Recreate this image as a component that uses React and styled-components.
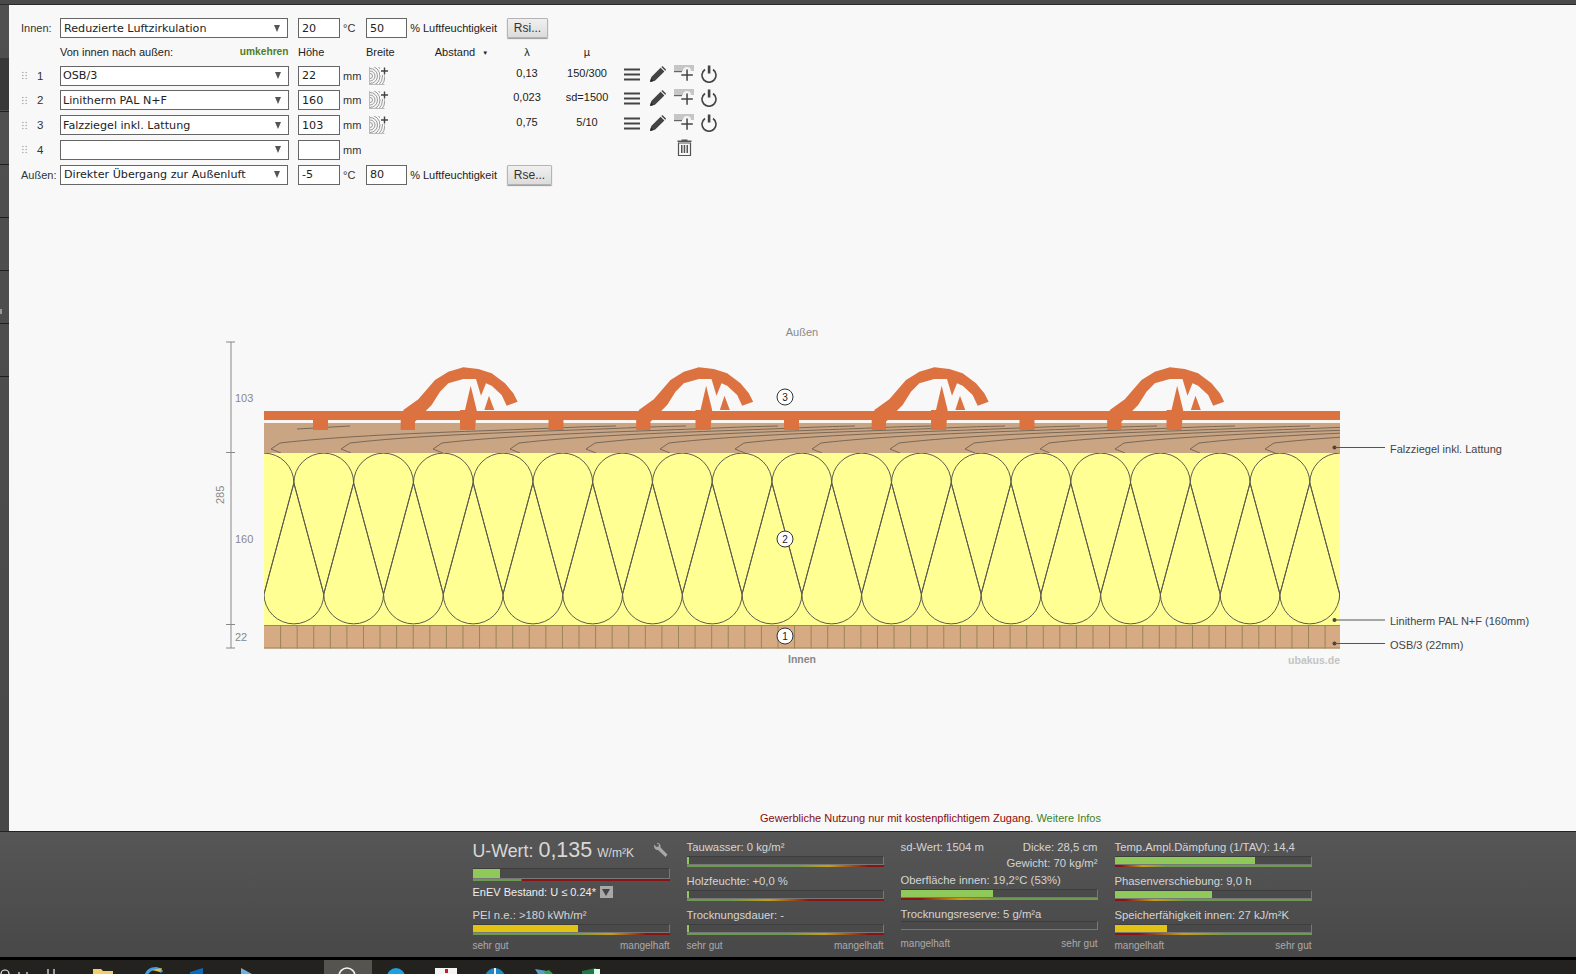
import React from 'react';
import styled, { createGlobalStyle } from 'styled-components';

const Global = createGlobalStyle`
  html, body { margin: 0; padding: 0; background: #000; }
  body { font-family: "Liberation Sans", Arial, sans-serif; }
`;

const Page = styled.div`
  width: 1576px;
  height: 974px;
  overflow: hidden;
  display: flex;
  flex-direction: column;
`;

const TopBar = styled.div`
  height: 5px;
  flex: none;
  background: #4a4a4a;
  border-bottom: 1px solid #2a2a2a;
  box-sizing: border-box;
`;

const Middle = styled.div`
  display: flex;
  height: 826px;
  flex: none;
`;

// the dark strip on the left has separators in its upper part only
const Sidebar = styled.div`
  width: 9px;
  flex: none;
  position: relative;
  background:
    linear-gradient(to bottom, transparent 53px, #383838 53px, #383838 105px, transparent 105px),
    repeating-linear-gradient(to bottom, transparent 0, transparent 52px, #1f1f1f 52px, #1f1f1f 53px) 0 1px / 100% 422px no-repeat,
    linear-gradient(#505050, #484848);

  &::after {
    content: '';
    position: absolute;
    left: 0;
    top: 304px;
    width: 2px;
    height: 5px;
    background: #999;
  }
`;

const Main = styled.div`
  flex: 1;
  background: #f8f8f8;
  display: flex;
  flex-direction: column;
  padding-top: 13px;
  box-sizing: border-box;
`;

const Form = styled.div`
  display: flex;
  flex-direction: column;
  gap: 4.75px;
  padding-left: 12px;
  font-size: 11px;
  color: #333;
`;

const Row = styled.div`
  display: grid;
  grid-template-columns: 39px 228.5px 9.5px 42px 26px 131px 60px 60px auto;
  height: ${({ $h }) => $h || 20}px;
  align-items: center;
`;

const RowLabel = styled.div`
  font-size: 11px;
  color: #333;
`;

const GripCell = styled.div`
  display: flex;
  align-items: center;
  gap: 9px;
  font-size: 11.5px;
  color: #333;
`;

const Grip = styled.span`
  width: 7px;
  height: 9px;
  background-image: radial-gradient(circle, #b4b4b4 1px, transparent 1.1px);
  background-size: 3.5px 3px;
`;

const SelectBox = styled.div`
  height: 100%;
  box-sizing: border-box;
  border: 1px solid #666;
  background: #fff;
  display: flex;
  align-items: center;
  justify-content: space-between;
  margin-right: ${({ $wide }) => ($wide ? 1 : 0)}px;
  padding: 0 7px 0 ${({ $wide }) => ($wide ? 3 : 2)}px;
  font-family: "DejaVu Sans", Verdana, sans-serif;
  font-size: 11.15px;
  color: #222;
  white-space: nowrap;
`;

const Caret = styled.span`
  width: 0;
  height: 0;
  border-left: 3.5px solid transparent;
  border-right: 3.5px solid transparent;
  border-top: 7px solid #555;
`;

const NumInput = styled.div`
  width: 42px;
  height: 100%;
  box-sizing: border-box;
  border: 1px solid #666;
  background: #fff;
  padding-left: 3px;
  display: flex;
  align-items: center;
  font-family: "DejaVu Sans", Verdana, sans-serif;
  font-size: 11.15px;
  color: #222;
`;

const Unit = styled.div`
  padding-left: 3px;
  font-size: 11px;
  color: #333;
`;

const Humid = styled.div`
  display: flex;
  align-items: center;
  gap: 3px;
  height: 100%;
  white-space: nowrap;
  font-size: 11px;
  color: #222;
`;

const Btn = styled.div`
  margin-left: 10px;
  width: ${({ $w }) => $w}px;
  height: 20px;
  box-sizing: border-box;
  border: 1px solid #b4b4b4;
  border-radius: 1px;
  background: linear-gradient(#f0f0f0, #dcdcdc);
  box-shadow: 0 1px 1px #999;
  display: flex;
  align-items: center;
  justify-content: center;
  font-size: 12px;
  color: #333;
`;

const HeadText = styled.div`
  color: #222;
  font-size: 11px;
`;

const HeadSplit = styled.div`
  display: flex;
  justify-content: space-between;
`;

const Reverse = styled.div`
  color: #4f7f1f;
  font-weight: bold;
  font-size: 10.2px;
`;

const HeadWidth = styled.div`
  display: flex;
  align-items: center;
  gap: 40px;
  color: #222;
  font-size: 11px;
`;

const SortMark = styled.span`
  font-size: 6px;
  margin-left: 7px;
  vertical-align: 1px;
`;

const Centered = styled.div`
  text-align: center;
  font-size: 11px;
  color: #222;
  position: relative;
  top: ${({ $up }) => $up || 0}px;
`;

const Actions = styled.div`
  display: flex;
  align-items: center;
  height: 20px;
  padding-left: 6px;
  margin-top: ${({ $m }) => $m || 0}px;
`;

const IconSlot = styled.span`
  display: block;
  height: 18px;
  margin-left: ${({ $ml }) => $ml || 0}px;
`;

const WidthIcon = styled.svg`
  margin-left: 3px;
  display: block;
`;

const ChartSvg = styled.svg`
  display: block;
  margin-top: 135.500px;
  flex: none;
`;

const Notice = styled.div`
  margin-top: 137px;
  text-align: center;
  padding-left: 276px;
  font-size: 11px;
  color: #8a0a0a;
`;

const NoticeLink = styled.span`
  color: #3f7f1f;
`;

const Panel = styled.div`
  height: 126px;
  flex: none;
  box-sizing: border-box;
  border-top: 1px solid #222;
  background: linear-gradient(#565656, #484848);
  padding: 0 0 0 472.5px;
  display: grid;
  grid-template-columns: 197px 197px 197px 197px;
  column-gap: 17px;
  color: #d4d4d4;
  font-size: 11.3px;
`;

const Col = styled.div`
  display: flex;
  flex-direction: column;
  padding-top: ${({ $top }) => $top || 8}px;
`;

const UHead = styled.div`
  display: flex;
  align-items: baseline;
  height: 27px;
  font-size: 17.8px;
  color: #d8d8d8;
  white-space: nowrap;
  position: relative;
`;

const UValue = styled.span`
  font-size: 21.5px;
  margin-left: 5px;
`;

const UUnit = styled.span`
  font-size: 12px;
  margin-left: 5px;
`;

const Wrench = styled.svg`
  position: absolute;
  right: 2px;
  top: 5px;
`;

const Metric = styled.div`
  height: 14px;
  line-height: 14px;
  white-space: nowrap;
  margin-top: ${({ $m }) => $m || 0}px;
  display: flex;
  justify-content: space-between;
  align-items: center;
`;

const Right = styled.div`
  text-align: right;
  height: 14px;
  line-height: 14px;
  margin-top: 2px;
  white-space: nowrap;
`;

const EnevLabel = styled.span`
  display: flex;
  align-items: center;
  color: #eee;
  font-size: 11px;
`;

const DropBox = styled.span`
  width: 13px;
  height: 12px;
  background: #a8a8a8;
  margin-left: 4px;
  display: inline-flex;
  align-items: center;
  justify-content: center;
`;

const DropCaret = styled.span`
  width: 0;
  height: 0;
  border-left: 4px solid transparent;
  border-right: 4px solid transparent;
  border-top: 7px solid #444;
`;

const BarTrack = styled.div`
  height: ${({ $big }) => ($big ? 9 : 7)}px;
  margin-top: ${({ $m }) => $m ?? 2}px;
  border-top: 1px solid #3d3d3d;
  border-right: 1px solid #777;
  background: #4a4a4a;
`;

const BarFill = styled.div`
  height: 100%;
  background: ${({ $c }) => $c};
`;

const Strip = styled.div`
  border-top: 1px solid #777;
  height: 2px;
  background: ${({ $g }) => $g};
`;

const Scale = styled.div`
  display: flex;
  justify-content: space-between;
  font-size: 10px;
  color: #aaa;
  margin-top: ${({ $m }) => $m || 5}px;
`;

const Gap = styled.div`
  height: 3px;
  background: #000;
  flex: none;
`;

const Taskbar = styled.div`
  height: 14px;
  flex: none;
  background: #23221e;
  position: relative;
  overflow: hidden;
`;

const TaskHighlight = styled.div`
  position: absolute;
  left: 324px;
  top: 0;
  width: 48px;
  height: 14px;
  background: #55544e;
`;

const TaskIcons = styled.svg`
  position: absolute;
  left: 0;
  top: 0;
`;

const GREEN = '#8fc95a';
const YELLOW = '#e2c213';
const G = '#6c9a4e';
const Y = '#c8a010';
const R = '#8a1414';

const goodBad = (a, b, c) => `linear-gradient(to right, ${G} 0%, ${G} ${a}%, ${Y} ${b}%, ${R} ${c}%, ${R} 100%)`;
const badGood = (a, b, c) => `linear-gradient(to right, ${R} 0%, ${R} ${a}%, ${Y} ${b}%, ${G} ${c}%, ${G} 100%)`;

function Bar({ fill, color = GREEN, strip, big, m }) {
  return (
    <>
      <BarTrack $big={big} $m={m}>
        {fill ? <BarFill $c={color} style={{ width: fill }} /> : null}
      </BarTrack>
      <Strip $g={strip} />
    </>
  );
}

function HamburgerIcon() {
  return (
    <svg width="18" height="18" viewBox="0 0 18 18">
      <path d="M1 3.500h16v2H1zM1 8.500h16v2H1zM1 13.500h16v2H1z" fill="#444" />
    </svg>
  );
}

function PencilIcon() {
  return (
    <svg width="18" height="18" viewBox="0 0 18 18">
      <path d="M1 17l1.300-5L11.600 2.700l3.800 3.800L6 15.800z" fill="#444" />
      <path d="M12.400 1.900l1-1 3.800 3.800-1 1z" fill="#444" />
      <path d="M1 17l1-3.600 2.600 2.600z" fill="#222" />
    </svg>
  );
}

function LayerAddIcon() {
  return (
    <svg width="21" height="18" viewBox="0 0 21 18">
      <rect x="0" y="0" width="20" height="6" fill="#c6c6c6" />
      <rect x="0" y="6" width="8" height="1.200" fill="#666" />
      <path d="M9 6a4 4 0 0 1 8 0z" fill="#f4f4f4" />
      <path d="M12.300 4.500h1.500v4.700h5v1.500h-5v5h-1.500v-5h-5V9.200h5z" fill="#444" />
    </svg>
  );
}

function PowerIcon() {
  return (
    <svg width="18" height="18" viewBox="0 0 18 18">
      <path d="M5 4.500a7 7 0 1 0 8 0" fill="none" stroke="#444" strokeWidth="1.600" />
      <rect x="7.800" y="0.500" width="2.600" height="8" fill="#444" />
    </svg>
  );
}

function TrashIcon() {
  return (
    <svg width="15" height="18" viewBox="0 0 15 18">
      <path d="M4.500 1.500h6v1h4v1.500H.5V2.500h4z" fill="#555" />
      <path d="M1.500 5h12v12.500h-12z" fill="none" stroke="#555" strokeWidth="1.200" />
      <path d="M4 7h1.500v8H4zM6.700 7h1.500v8H6.700zM9.500 7h1.500v8H9.500z" fill="#555" />
    </svg>
  );
}

function WavesIcon() {
  return (
    <WidthIcon width="20" height="20" viewBox="0 0 20 20">
      <svg x="0" y="1" width="16" height="18" viewBox="0 0 16 18">
        <g fill="none" stroke="#9a9a9a" strokeWidth="1">
          <circle cx="1" cy="9" r="2.500" />
          <circle cx="1" cy="9" r="5" />
          <circle cx="1" cy="9" r="7.500" />
          <circle cx="1" cy="9" r="10" />
          <circle cx="1" cy="9" r="12.500" />
          <circle cx="1" cy="9" r="15" />
        </g>
        <path d="M.5 0v18M.5 17.500h15" stroke="#bbb" strokeWidth="1" fill="none" />
      </svg>
      <rect x="11" y="0" width="9" height="9" fill="#f8f8f8" />
      <path d="M14.800 1.500h1.400v2.800H19v1.400h-2.800v2.800h-1.400V5.700H12V4.300h2.800z" fill="#444" />
    </WidthIcon>
  );
}

const grid = 59.76;
const top = 453;
const left = 264;
const right = 1340;

function Insulation() {
  const cyTop = 483;
  const cyBot = 594;
  const shapes = [];
  for (let k = 0; k <= 18; k++) {
    const cx = left + grid * k;
    const r = grid / 2;
    shapes.push(
      <path
        key={`t${k}`}
        d={`M${cx - r} ${cyTop}A${r} ${r} 0 0 1 ${cx + r} ${cyTop}L${cx} ${cyBot}Z`}
      />,
    );
    const bx = cx + r;
    shapes.push(
      <path
        key={`b${k}`}
        d={`M${bx - r} ${cyBot}A${r} ${r} 0 0 0 ${bx + r} ${cyBot}L${bx} ${cyTop}Z`}
      />,
    );
  }
  return (
    <g clipPath="url(#ins)" fill="none" stroke="#5c5c50" strokeWidth="1">
      {shapes}
    </g>
  );
}

function Osb() {
  const cells = [];
  const step = 16.58;
  for (let x = left + step; x < right; x += step) {
    cells.push(<line key={x} x1={x} x2={x} y1="625" y2="648.500" />);
  }
  return (
    <g>
      <rect x={left} y="625" width={right - left} height="23.500" fill="#d6aa82" />
      <g stroke="#998659" strokeWidth="1">
        {cells}
        <line x1={left} x2={right} y1="625.500" y2="625.500" />
        <line x1={left} x2={right} y1="648" y2="648" />
      </g>
    </g>
  );
}

const hooks = [271, 341, 433, 510, 586, 660, 735, 812, 890, 965, 1040, 1115, 1190, 1265];

function Wood() {
  return (
    <g>
      <rect x={left} y="423" width={right - left} height="30" fill="#c9a584" />
      <g clipPath="url(#wood)" fill="none" stroke="#6f6152" strokeWidth="0.900">
        <path d="M297 429L350 426" />
        {hooks.map((x) => (
          <path
            key={x}
            d={`M${x + 10} 453L${x} 449L${x + 9} 443C${x + 70} 436 ${x + 150} 433 ${x + 220} 430.500S${x + 300} 427 ${x + 345} 426`}
          />
        ))}
      </g>
    </g>
  );
}

function pts(list, dx) {
  return list.map(([x, y]) => `${380 + x / 3 + dx},${355 + y / 3}`).join(' ');
}

const ridge = [
  [70, 165], [115, 133], [165, 75], [205, 50], [250, 37], [295, 42], [335, 55], [375, 85],
  [400, 115], [413, 140], [380, 152], [365, 120], [335, 92], [318, 85], [303, 122], [288, 72],
  [250, 72], [205, 85], [180, 110], [155, 150], [105, 200], [105, 225], [62, 225], [62, 190], [70, 190],
];
const spikeA = [[240, 165], [255, 165], [272, 92], [290, 165], [285, 225], [240, 225]];
const spikeB = [[313, 165], [327, 122], [343, 165]];

function Tiles() {
  const period = 235.5;
  const offs = [0, 1, 2, 3];
  return (
    <g fill="#dc7240">
      <rect x={left} y="411" width={right - left} height="9.500" />
      <rect x={left} y="420" width={right - left} height="3" fill="#fdf6f0" />
      {offs.map((k) => (
        <rect key={k} x={313 + period * k} y="420" width="15" height="10" />
      ))}
      {offs.map((k) => (
        <g key={k}>
          <polygon points={pts(ridge, period * k)} />
          <polygon points={pts(spikeA, period * k)} />
          <polygon points={pts(spikeB, period * k)} />
        </g>
      ))}
    </g>
  );
}

const Dim = styled.g`
  stroke: #888;
  stroke-width: 1;
`;

const DimLabel = styled.text`
  font-family: "Liberation Sans", Arial, sans-serif;
  font-size: 11px;
  fill: #888;
`;

const BoldLabel = styled(DimLabel)`
  font-size: 10.5px;
  font-weight: bold;
  fill: ${({ $c }) => $c || '#888'};
`;

const CalloutText = styled.text`
  font-family: "Liberation Sans", Arial, sans-serif;
  font-size: 11px;
  fill: #444;
`;

const Marker = styled.text`
  font-family: "Liberation Sans", Arial, sans-serif;
  font-size: 10px;
  fill: #222;
  text-anchor: middle;
`;

function Bubble({ y, n }) {
  return (
    <g>
      <circle cx="785" cy={y} r="8" fill="#fff" stroke="#333" strokeWidth="1" />
      <Marker x="785" y={y + 3.500}>{n}</Marker>
    </g>
  );
}

function Callout({ y, text }) {
  return (
    <g>
      <circle cx="1334.500" cy={y} r="2" fill="#444" />
      <line x1="1335" x2="1385" y1={y} y2={y} stroke="#555" />
      <CalloutText x="1390" y={y + 5}>{text}</CalloutText>
    </g>
  );
}

function RoofChart() {
  return (
    <ChartSvg width="1567" height="355" viewBox="9 320 1567 355">
      <defs>
        <clipPath id="ins"><rect x={left} y={top} width={right - left} height="172" /></clipPath>
        <clipPath id="wood"><rect x={left} y="423" width={right - left} height="30" /></clipPath>
      </defs>
      <DimLabel x="802" y="336" textAnchor="middle">Außen</DimLabel>
      <Dim>
        <line x1="231" x2="231" y1="342" y2="648" />
        <line x1="226" x2="235" y1="342" y2="342" />
        <line x1="226" x2="235" y1="452.500" y2="452.500" />
        <line x1="226" x2="235" y1="624.500" y2="624.500" />
        <line x1="226" x2="235" y1="648" y2="648" />
      </Dim>
      <DimLabel x="235" y="402">103</DimLabel>
      <DimLabel x="235" y="543">160</DimLabel>
      <DimLabel x="235" y="641">22</DimLabel>
      <DimLabel transform="translate(224 504) rotate(-90)">285</DimLabel>
      <rect x={left} y={top} width={right - left} height="172" fill="#ffff94" />
      <Insulation />
      <Wood />
      <Tiles />
      <Osb />
      <Bubble y={397} n="3" />
      <Bubble y={539} n="2" />
      <Bubble y={636} n="1" />
      <Callout y={447.500} text="Falzziegel inkl. Lattung" />
      <Callout y={620} text="Linitherm PAL N+F (160mm)" />
      <Callout y={643.500} text="OSB/3 (22mm)" />
      <BoldLabel x="802" y="663" textAnchor="middle">Innen</BoldLabel>
      <BoldLabel x="1340" y="664" textAnchor="end" $c="#c4c4c4">ubakus.de</BoldLabel>
    </ChartSvg>
  );
}

const layers = [
  { n: 1, name: 'OSB/3', h: '22', lambda: '0,13', mu: '150/300' },
  { n: 2, name: 'Linitherm PAL N+F', h: '160', lambda: '0,023', mu: 'sd=1500' },
  { n: 3, name: 'Falzziegel inkl. Lattung', h: '103', lambda: '0,75', mu: '5/10' },
];

function LayerRow({ n, name, h, lambda, mu }) {
  return (
    <Row>
      <GripCell><Grip />{n}</GripCell>
      <SelectBox>{name}<Caret /></SelectBox>
      <span />
      <NumInput>{h}</NumInput>
      <Unit>mm</Unit>
      <WavesIcon />
      <Centered $up={-3}>{lambda}</Centered>
      <Centered $up={-3}>{mu}</Centered>
      <Actions $m={-4}>
        <IconSlot><HamburgerIcon /></IconSlot>
        <IconSlot $ml={8}><PencilIcon /></IconSlot>
        <IconSlot $ml={7}><LayerAddIcon /></IconSlot>
        <IconSlot $ml={5}><PowerIcon /></IconSlot>
      </Actions>
    </Row>
  );
}

export default function App() {
  return (
    <Page>
      <Global />
      <TopBar />
      <Middle>
        <Sidebar />
        <Main>
          <Form>
            <Row>
              <RowLabel>Innen:</RowLabel>
              <SelectBox $wide>Reduzierte Luftzirkulation<Caret /></SelectBox>
              <span />
              <NumInput>20</NumInput>
              <Unit>°C</Unit>
              <Humid><NumInput>50</NumInput>% Luftfeuchtigkeit</Humid>
              <Btn $w={41}>Rsi...</Btn>
            </Row>
            <Row $h={18}>
              <span />
              <HeadSplit>
                <HeadText>Von innen nach außen:</HeadText>
                <Reverse>umkehren</Reverse>
              </HeadSplit>
              <span />
              <HeadText>Höhe</HeadText>
              <span />
              <HeadWidth>
                <span>Breite</span>
                <span>Abstand<SortMark>▼</SortMark></span>
              </HeadWidth>
              <Centered>λ</Centered>
              <Centered>µ</Centered>
            </Row>
            {layers.map((l) => <LayerRow key={l.n} {...l} />)}
            <Row>
              <GripCell><Grip />4</GripCell>
              <SelectBox><span /><Caret /></SelectBox>
              <span />
              <NumInput />
              <Unit>mm</Unit>
              <span />
              <span />
              <span />
              <Actions $m={-5}>
                <IconSlot $ml={54}><TrashIcon /></IconSlot>
              </Actions>
            </Row>
            <Row>
              <RowLabel>Außen:</RowLabel>
              <SelectBox $wide>Direkter Übergang zur Außenluft<Caret /></SelectBox>
              <span />
              <NumInput>-5</NumInput>
              <Unit>°C</Unit>
              <Humid><NumInput>80</NumInput>% Luftfeuchtigkeit</Humid>
              <Btn $w={45}>Rse...</Btn>
            </Row>
          </Form>
          <RoofChart />
          <Notice>
            Gewerbliche Nutzung nur mit kostenpflichtigem Zugang. <NoticeLink>Weitere Infos</NoticeLink>
          </Notice>
        </Main>
      </Middle>
      <Panel>
        <Col $top={6}>
          <UHead>
            U-Wert:<UValue>0,135</UValue><UUnit>W/m²K</UUnit>
            <Wrench width="15" height="15" viewBox="0 0 15 15">
              <path d="M1 1.500L3.500 4l2-.5L6 1.500 3.500.3C6 -.5 8 1.500 7.500 4.500L14.500 11.500 12.500 14 5 7C2.500 7.500 .5 5 1 1.500z" fill="#a8a8a8" />
            </Wrench>
          </UHead>
          <Bar fill="27px" big m={3} strip={`linear-gradient(to right, ${G} 0, ${G} 48px, ${R} 49px, ${R} 100%)`} />
          <Metric $m={4}>
            <EnevLabel>EnEV Bestand: U ≤ 0.24*<DropBox><DropCaret /></DropBox></EnevLabel>
          </Metric>
          <Metric $m={9}>PEI n.e.: &gt;180 kWh/m²</Metric>
          <Bar fill="105px" color={YELLOW} strip={goodBad(50, 70, 88)} />
          <Scale><span>sehr gut</span><span>mangelhaft</span></Scale>
        </Col>
        <Col>
          <Metric>Tauwasser: 0 kg/m²</Metric>
          <Bar fill="2px" strip={goodBad(55, 72, 92)} />
          <Metric $m={7}>Holzfeuchte: +0,0 %</Metric>
          <Bar fill="2px" strip={goodBad(22, 42, 62)} />
          <Metric $m={7}>Trocknungsdauer: -</Metric>
          <Bar fill="2px" strip={goodBad(50, 70, 92)} />
          <Scale><span>sehr gut</span><span>mangelhaft</span></Scale>
        </Col>
        <Col>
          <Metric><span>sd-Wert: 1504 m</span><span>Dicke: 28,5 cm</span></Metric>
          <Right>Gewicht: 70 kg/m²</Right>
          <Metric $m={3}>Oberfläche innen: 19,2°C (53%)</Metric>
          <Bar fill="92px" strip={badGood(10, 30, 50)} />
          <Metric $m={7}>Trocknungsreserve: 5 g/m²a</Metric>
          <Bar m={0} strip="transparent" />
          <Scale $m={6}><span>mangelhaft</span><span>sehr gut</span></Scale>
        </Col>
        <Col>
          <Metric>Temp.Ampl.Dämpfung (1/TAV): 14,4</Metric>
          <Bar fill="140px" strip={badGood(3, 14, 26)} />
          <Metric $m={7}>Phasenverschiebung: 9,0 h</Metric>
          <Bar fill="97px" strip={badGood(5, 20, 36)} />
          <Metric $m={7}>Speicherfähigkeit innen: 27 kJ/m²K</Metric>
          <Bar fill="52px" color={YELLOW} strip={badGood(12, 35, 58)} />
          <Scale><span>mangelhaft</span><span>sehr gut</span></Scale>
        </Col>
      </Panel>
      <Gap />
      <Taskbar>
        <TaskHighlight />
        <TaskIcons width="640" height="14" viewBox="0 0 640 14">
          <circle cx="5" cy="14" r="4" fill="none" stroke="#eee" strokeWidth="1.200" />
          <path d="M19 14v-2M27 14v-2M48 14V9M54 14V9" stroke="#eee" strokeWidth="1.200" />
          <path d="M93 14V9h8l2 2h10v3z" fill="#f0cf6a" />
          <path d="M146 17a9 9 0 0 1 16-5" fill="none" stroke="#3f9fe0" strokeWidth="3" />
          <path d="M152 10l10-2-2 4z" fill="#e8c040" />
          <path d="M190 12l13-4v6h-13z" fill="#0a6cc0" />
          <path d="M241 8l11 6h-11z" fill="#6fb0e0" />
          <path d="M339 16a8 8 0 0 1 16 0" fill="none" stroke="#f4f4f4" strokeWidth="1.600" />
          <circle cx="396" cy="17" r="9" fill="#1da0e0" />
          <rect x="435" y="8" width="22" height="6" fill="#f4f4f4" />
          <rect x="445" y="9" width="3" height="4" fill="#c02020" />
          <circle cx="495" cy="18" r="10" fill="#1a8ac8" />
          <path d="M494 8h2v6h-2z" fill="#f4f4f4" />
          <path d="M535 9l12 2 1 3h-10z" fill="#5a9fc0" />
          <path d="M544 12l5-2 4 4h-8z" fill="#3aa050" />
          <path d="M582 11l14-3v6h-14z" fill="#1e7a44" />
          <rect x="594" y="9" width="6" height="5" fill="#dfe" />
        </TaskIcons>
      </Taskbar>
    </Page>
  );
}
